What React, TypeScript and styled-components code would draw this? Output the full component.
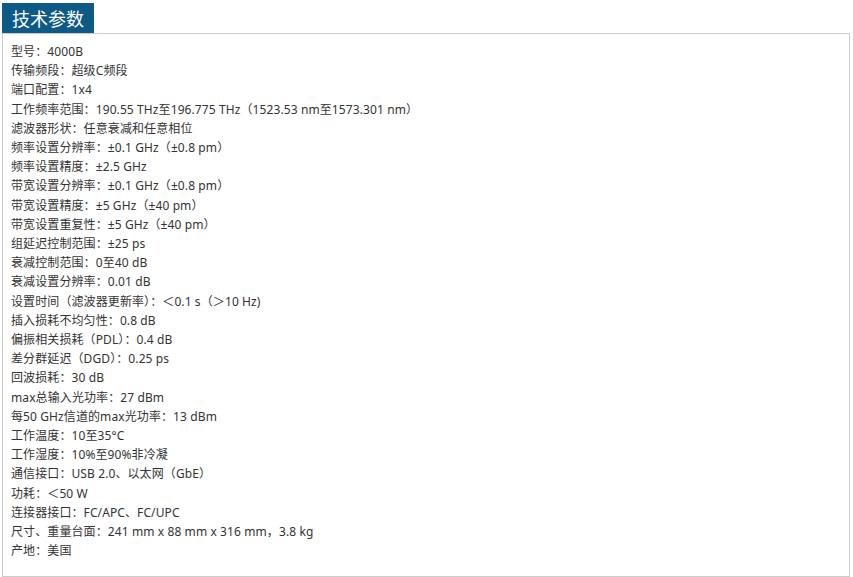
import React from "react"
import styled, { createGlobalStyle } from "styled-components"

const GlobalStyle = createGlobalStyle`
    html, body {
        margin: 0;
        padding: 0;
        background: #fff;
    }
    body {
        font-family: "Noto Sans", "Noto Sans CJK SC", sans-serif;
    }
`

const Section = styled.section`
    padding: 3px 0 0 2px;
    width: 848px;
`

const TabTitle = styled.h3`
    display: inline-block;
    margin: 0;
    height: 30px;
    padding: 0 10px 0 10px;
    background: #0c5a85;
    color: #fff;
    font-family: "Noto Sans CJK SC", sans-serif;
    font-size: 18px;
    font-weight: 400;
    line-height: 30px;
    vertical-align: top;
`

const SpecBox = styled.div`
    border: 1px solid #cccccc;
    padding: 8px 8px 0 8px;
    box-sizing: border-box;
    height: 544px;
`

const SpecList = styled.ul`
    list-style: none;
    margin: 0;
    padding: 0;
`

const SpecItem = styled.li`
    font-family: "Noto Sans", "Noto Sans CJK SC", sans-serif;
    font-size: 12px;
    line-height: 19.2px;
    letter-spacing: 0.1px;
    color: #333;
`

const specs: string[] = [
    "型号：4000B",
    "传输频段：超级C频段",
    "端口配置：1x4",
    "工作频率范围：190.55 THz至196.775 THz（1523.53 nm至1573.301 nm）",
    "滤波器形状：任意衰减和任意相位",
    "频率设置分辨率：±0.1 GHz（±0.8 pm）",
    "频率设置精度：±2.5 GHz",
    "带宽设置分辨率：±0.1 GHz（±0.8 pm）",
    "带宽设置精度：±5 GHz（±40 pm）",
    "带宽设置重复性：±5 GHz（±40 pm）",
    "组延迟控制范围：±25 ps",
    "衰减控制范围：0至40 dB",
    "衰减设置分辨率：0.01 dB",
    "设置时间（滤波器更新率）：＜0.1 s（＞10 Hz)",
    "插入损耗不均匀性：0.8 dB",
    "偏振相关损耗（PDL）：0.4 dB",
    "差分群延迟（DGD）：0.25 ps",
    "回波损耗：30 dB",
    "max总输入光功率：27 dBm",
    "每50 GHz信道的max光功率：13 dBm",
    "工作温度：10至35°C",
    "工作湿度：10%至90%非冷凝",
    "通信接口：USB 2.0、以太网（GbE）",
    "功耗：＜50 W",
    "连接器接口：FC/APC、FC/UPC",
    "尺寸、重量台面：241 mm x 88 mm x 316 mm，3.8 kg",
    "产地：美国",
]

export default function App() {
    return (
        <>
            <GlobalStyle />
            <Section>
                <TabTitle>技术参数</TabTitle>
                <SpecBox>
                    <SpecList>
                        {specs.map((s, i) => (
                            <SpecItem key={i}>{s}</SpecItem>
                        ))}
                    </SpecList>
                </SpecBox>
            </Section>
        </>
    )
}
